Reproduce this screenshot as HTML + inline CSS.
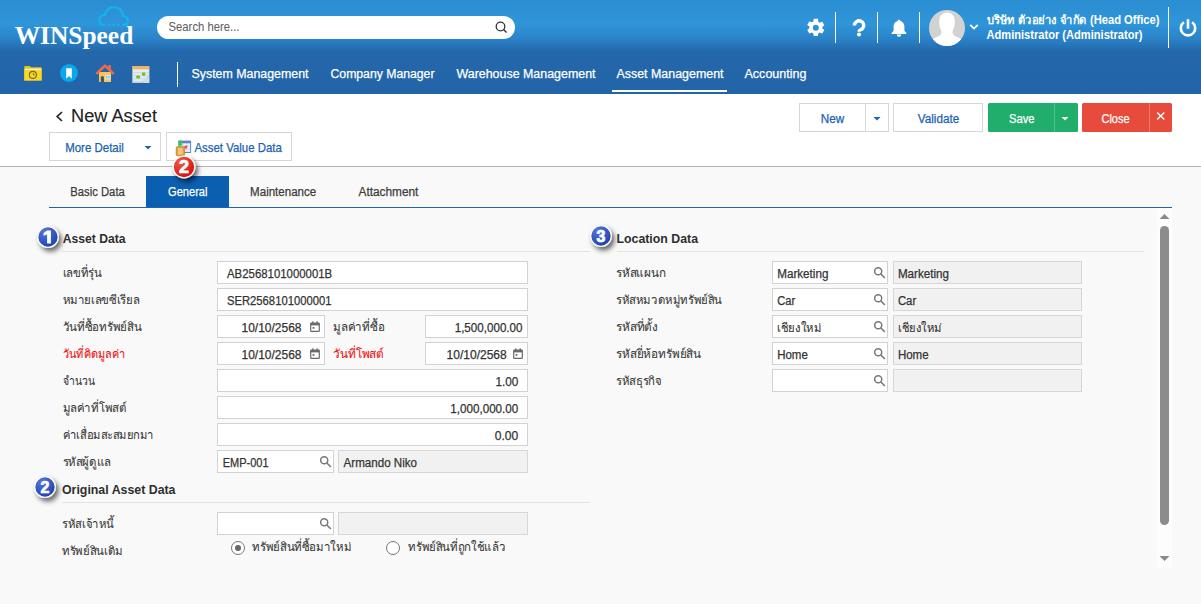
<!DOCTYPE html>
<html><head><meta charset="utf-8">
<style>
*{box-sizing:border-box;margin:0;padding:0}
html,body{width:1201px;height:604px;overflow:hidden;background:#f9f9f9;font-family:"Liberation Sans",sans-serif;color:#333}
.a{position:absolute}
.vd{position:absolute;background:#fff;width:1px}
.btn{position:absolute;border:1px solid #d6d6d6;background:#fff}
.inp{position:absolute;border:1px solid #d2d2d2;background:#fff;height:23px}
.ro{position:absolute;border:1px solid #d6d6d6;background:#f1f1f1;height:23px}
.hl{position:absolute;height:1px;background:#e3e3e3}
</style></head><body>
<div class="a" style="left:0;top:0;width:1201px;height:94px;background:linear-gradient(to bottom,#2b8dd2 0px,#2f95d9 24px,#2b84c9 38px,#2467ab 52px,#2264a7 94px)"></div>
<svg class="a" style="left:97px;top:4px" width="34" height="24" viewBox="0 0 34 24">
<path d="M7 20.9 C3.6 20.9 2.3 18.6 2.3 16.1 C2.3 12.9 4.8 10.7 7.9 10.9 C9.1 6.1 12.6 3.1 16.9 3.1 C22 3.1 25.8 7 26.1 11.9 C29.1 12.4 30.9 14.6 30.9 17.1 C30.9 19.6 29 20.9 26.4 20.9" fill="none" stroke="#14b2ee" stroke-width="2.3" stroke-linecap="round"/>
<path d="M11 20.9 H13.4 M15.6 20.9 H18 M20.2 20.9 H22.6" stroke="#14b2ee" stroke-width="2.3"/></svg>
<div class="a" style="left:157px;top:16px;width:358px;height:23px;border-radius:12px;background:#fff"></div>
<svg class="a" style="left:494px;top:20px" width="14" height="14" viewBox="0 0 14 14"><circle cx="6.5" cy="6.5" r="4.3" fill="none" stroke="#333" stroke-width="1.3"/><path d="M9.6 9.6 L12.5 12.5" stroke="#333" stroke-width="1.4"/></svg>
<svg class="a" style="left:805.3px;top:17.4px" width="21.6" height="21.6" viewBox="0 0 24 24"><path fill="#fff" d="M19.14 12.94c.04-.3.06-.61.06-.94 0-.32-.02-.64-.07-.94l2.03-1.58a.49.49 0 0 0 .12-.61l-1.92-3.32a.49.49 0 0 0-.59-.22l-2.39.96c-.5-.38-1.03-.7-1.62-.94l-.36-2.54A.48.48 0 0 0 13.92 2h-3.84c-.24 0-.43.17-.47.41l-.36 2.54c-.59.24-1.13.57-1.62.94l-2.39-.96a.48.48 0 0 0-.59.22L2.74 8.47c-.12.21-.08.47.12.61l2.03 1.58c-.05.3-.09.63-.09.94s.02.64.07.94l-2.03 1.58a.49.49 0 0 0-.12.61l1.92 3.32c.12.22.37.29.59.22l2.39-.96c.5.38 1.03.7 1.62.94l.36 2.54c.05.24.24.41.48.41h3.84c.24 0 .44-.17.47-.41l.36-2.54c.59-.24 1.13-.56 1.62-.94l2.39.96c.22.08.47 0 .59-.22l1.92-3.32c.12-.22.07-.47-.12-.61l-2.01-1.58zM12 15.3A3.3 3.3 0 1 1 12 8.7a3.3 3.3 0 0 1 0 6.6z"/></svg>
<div class="vd" style="left:835px;top:12px;height:31px"></div>
<svg class="a" style="left:851px;top:17px" width="16" height="22" viewBox="0 0 16 22"><path d="M3.45 8.4 A4.65 4.65 0 1 1 11.4 11.7 C9.5 12.8 8.1 13 8.1 14.2 V14.8" fill="none" stroke="#fff" stroke-width="3.4"/><circle cx="8" cy="17.5" r="2.05" fill="#fff"/></svg>
<div class="vd" style="left:877px;top:12px;height:31px"></div>
<svg class="a" style="left:890px;top:18px" width="18" height="20" viewBox="0 0 18 19"><path fill="#fff" d="M9 1.2c.8 0 1.3.5 1.3 1.2 2.6.6 4.1 2.8 4.1 5.6v4.3l2 2.2v.9H1.6v-.9l2-2.2V8c0-2.8 1.5-5 4.1-5.6 0-.7.5-1.2 1.3-1.2zM6.8 16.1h4.4c0 1.3-1 2.3-2.2 2.3s-2.2-1-2.2-2.3z"/></svg>
<div class="vd" style="left:919px;top:12px;height:31px"></div>
<svg class="a" style="left:929px;top:10px" width="36" height="36" viewBox="0 0 36 36"><defs><clipPath id="avc"><circle cx="18" cy="18" r="18"/></clipPath></defs><circle cx="18" cy="18" r="18" fill="#d2d2d2"/><path clip-path="url(#avc)" fill="#fff" d="M18 2.5 C23 2.5 25.8 6 25.8 11.5 C25.8 16 24.5 19.5 23.5 21.5 C23.5 24 24.5 25.5 27 26.5 C31 28 34 30 36 34 V36 H0 V34 C2 30 5 28 9 26.5 C11.5 25.5 12.5 24 12.5 21.5 C11.5 19.5 10.2 16 10.2 11.5 C10.2 6 13 2.5 18 2.5z"/></svg>
<svg class="a" style="left:969px;top:23px" width="10" height="8" viewBox="0 0 10 8"><path d="M1.2 1.8 L5 5.6 L8.8 1.8" fill="none" stroke="#fff" stroke-width="1.8"/></svg>
<div class="vd" style="left:1168px;top:7px;height:41px"></div>
<svg class="a" style="left:1178px;top:18px" width="20" height="20" viewBox="0 0 20 20"><path d="M5.9 4.3 A7.2 7.2 0 1 0 14.1 4.3" fill="none" stroke="#fff" stroke-width="2.6"/><path d="M10 1.2 V10.8" stroke="#fff" stroke-width="2.6"/></svg>
<svg class="a" style="left:23px;top:64px" width="20" height="18" viewBox="0 0 20 18"><path d="M1.3 2.6 Q1.3 2 2 2 H6.8 L7.8 3.2 H18 Q18.6 3.2 18.6 3.8 V16.5 H1.3z" fill="#e8c01a"/><rect x="1.3" y="4.3" width="17.3" height="12.2" fill="#f7d82a"/><rect x="2" y="4.8" width="15.8" height="1.2" fill="#fbf3d0"/><circle cx="9.9" cy="10.9" r="3.5" fill="none" stroke="#7a6812" stroke-width="1.1"/><path d="M9.9 10.9 V8.6 L12 11.6z" fill="#7a6812"/></svg>
<svg class="a" style="left:60px;top:64px" width="18" height="18" viewBox="0 0 18 18"><circle cx="9" cy="9" r="9" fill="#0aa7ea"/><path d="M6.2 4.2 H11.8 V14.8 L9 12.1 L6.2 14.8z" fill="#fff"/></svg>
<svg class="a" style="left:95px;top:63px" width="20" height="20" viewBox="0 0 20 20"><rect x="13.2" y="2" width="2.6" height="5" fill="#ee6a4c"/><rect x="4" y="9" width="12" height="10" fill="#f8c65a"/><path d="M2 10.2 L10 2.6 L18 10.2" fill="none" stroke="#ee6a4c" stroke-width="2.6" stroke-linecap="round" stroke-linejoin="round"/><path d="M5.8 19 V14.5 A1.6 1.6 0 0 1 9 14.5 V19z" fill="#4b5563"/><rect x="10.8" y="12.4" width="4.2" height="3.6" fill="#7fc6f0" stroke="#fff" stroke-width="0.5"/><path d="M12.9 12.4 V16" stroke="#fff" stroke-width="0.6"/></svg>
<svg class="a" style="left:132px;top:65.6px" width="18" height="17" viewBox="0 0 18 17"><rect x="0.6" y="0.5" width="16.5" height="16.3" fill="#f3f8fb" stroke="#c8ccd0" stroke-width="0.5"/><rect x="1.3" y="4.2" width="2.4" height="2.2" fill="#d3ebfa"/><rect x="1.3" y="7.2" width="2.4" height="2.2" fill="#d3ebfa"/><rect x="1.3" y="10.2" width="2.4" height="2.2" fill="#d3ebfa"/><rect x="1.3" y="13.2" width="2.4" height="2.2" fill="#d3ebfa"/><rect x="4.5" y="4.2" width="2.4" height="2.2" fill="#d3ebfa"/><rect x="4.5" y="7.2" width="2.4" height="2.2" fill="#d3ebfa"/><rect x="4.5" y="10.2" width="2.4" height="2.2" fill="#d3ebfa"/><rect x="4.5" y="13.2" width="2.4" height="2.2" fill="#d3ebfa"/><rect x="7.7" y="4.2" width="2.4" height="2.2" fill="#d3ebfa"/><rect x="7.7" y="7.2" width="2.4" height="2.2" fill="#d3ebfa"/><rect x="7.7" y="10.2" width="2.4" height="2.2" fill="#d3ebfa"/><rect x="7.7" y="13.2" width="2.4" height="2.2" fill="#d3ebfa"/><rect x="10.9" y="4.2" width="2.4" height="2.2" fill="#d3ebfa"/><rect x="10.9" y="7.2" width="2.4" height="2.2" fill="#d3ebfa"/><rect x="10.9" y="10.2" width="2.4" height="2.2" fill="#d3ebfa"/><rect x="10.9" y="13.2" width="2.4" height="2.2" fill="#d3ebfa"/><rect x="14.1" y="4.2" width="2.4" height="2.2" fill="#d3ebfa"/><rect x="14.1" y="7.2" width="2.4" height="2.2" fill="#d3ebfa"/><rect x="14.1" y="10.2" width="2.4" height="2.2" fill="#d3ebfa"/><rect x="14.1" y="13.2" width="2.4" height="2.2" fill="#d3ebfa"/><path d="M0.6 6.8h16.5M0.6 9.8h16.5M0.6 12.8h16.5M0.6 15.8h16.5" stroke="#b5b9bd" stroke-width="0.6"/><rect x="0.6" y="0.5" width="16.5" height="3" fill="#fdb05a"/><rect x="4.3" y="9.6" width="3.6" height="2.8" fill="#6fbf12"/><rect x="10" y="6.6" width="3.3" height="3" fill="#6fbf12"/><path d="M10.6 16.8 L17.1 10.6 V16.8z" fill="#d8dde3"/><path d="M10.6 16.8 Q11.8 12.2 17.1 10.6 Q13.2 14 10.6 16.8z" fill="#f7f9fb" stroke="#9aa8b8" stroke-width="0.4"/></svg>
<div class="vd" style="left:177px;top:62px;height:25px"></div>
<div class="a" style="left:612px;top:90px;width:115px;height:2px;background:#fff"></div>
<div class="a" style="left:0;top:94px;width:1201px;height:73px;background:#fff;border-bottom:1px solid #b4b4b4"></div>
<svg class="a" style="left:54px;top:110px" width="11" height="13" viewBox="0 0 11 13"><path d="M8 2 L3.2 6.5 L8 11" fill="none" stroke="#222" stroke-width="1.7"/></svg>
<div class="btn" style="left:49px;top:132px;width:112px;height:29px"></div>
<svg class="a" style="left:144px;top:146px" width="8" height="4" viewBox="0 0 8 4"><path d="M0.5 0 H7.5 L4 3.5z" fill="#1a62b2"/></svg>
<div class="btn" style="left:166px;top:132px;width:126px;height:29px"></div>
<svg class="a" style="left:175px;top:140px" width="17" height="17" viewBox="0 0 17 17"><rect x="3.8" y="1.1" width="11.8" height="11.4" fill="#f2f6fc" stroke="#5a84c4" stroke-width="1"/><rect x="3.8" y="1.1" width="11.8" height="2.2" fill="#5a84c4"/><path d="M4 6h11.5M4 9h11.5M8 3.3v9M12 3.3v9" stroke="#a9c0e3" stroke-width="0.6"/><circle cx="10.8" cy="7" r="1.6" fill="#ee4a5a"/><rect x="1.2" y="6.8" width="8.4" height="9" rx="1.2" fill="#e0a23e" stroke="#b97a1c" stroke-width="0.7"/><rect x="3" y="8" width="4.6" height="6.5" fill="#f3c878"/><path d="M4.3 0.6 H6.5 V3.8 H7.8 L5.4 6.6 L3 3.8 H4.3z" fill="#1fd43c"/></svg>
<div class="btn" style="left:799px;top:103px;width:90px;height:29px"></div>
<div class="a" style="left:865px;top:104px;width:1px;height:27px;background:#d6d6d6"></div>
<svg class="a" style="left:873px;top:117px" width="8" height="4" viewBox="0 0 8 4"><path d="M0.5 0 H7.5 L4 3.5z" fill="#1a62b2"/></svg>
<div class="btn" style="left:893px;top:103px;width:90px;height:29px"></div>
<div class="a" style="left:988px;top:103px;width:90px;height:29px;background:#21ad6b;border-radius:1.5px"></div>
<div class="a" style="left:1054px;top:103px;width:1px;height:29px;background:#4cc38b"></div>
<svg class="a" style="left:1061px;top:117px" width="8" height="4" viewBox="0 0 8 4"><path d="M0.5 0 H7.5 L4 3.5z" fill="#fff"/></svg>
<div class="a" style="left:1082px;top:103px;width:90px;height:29px;background:#e74b3c;border-radius:1.5px"></div>
<div class="a" style="left:1149px;top:103px;width:1px;height:29px;background:#ee7a6e"></div>
<svg class="a" style="left:1156px;top:112px" width="10" height="8" viewBox="0 0 10 8"><path d="M1.2 0.5 L8.3 7.5 M8.3 0.5 L1.2 7.5" stroke="#fff" stroke-width="1.4"/></svg>
<div class="a" style="left:146px;top:176px;width:83px;height:32px;background:#0b5fb0"></div>
<div class="a" style="left:49px;top:207px;width:1123px;height:1px;background:#1d64b1"></div>
<div class="hl" style="left:62px;top:251px;width:1082px"></div>
<div class="inp" style="left:217px;top:261px;width:311px"></div>
<div class="inp" style="left:217px;top:288px;width:311px"></div>
<div class="inp" style="left:217px;top:315px;width:108px"></div>
<svg class="a" style="left:310px;top:320.5px" width="10" height="11" viewBox="0 0 10 11"><rect x="0.7" y="2.2" width="8.6" height="8.1" rx="0.6" fill="none" stroke="#6a6a6a" stroke-width="1.2"/><rect x="0.7" y="2" width="8.6" height="2.4" fill="#6a6a6a"/><rect x="2.2" y="0.3" width="1.3" height="2" fill="#6a6a6a"/><rect x="6.5" y="0.3" width="1.3" height="2" fill="#6a6a6a"/><rect x="2.6" y="6" width="1.8" height="1.8" fill="#6a6a6a"/></svg>
<div class="inp" style="left:425px;top:315px;width:103px"></div>
<div class="inp" style="left:217px;top:342px;width:108px"></div>
<svg class="a" style="left:310px;top:347.5px" width="10" height="11" viewBox="0 0 10 11"><rect x="0.7" y="2.2" width="8.6" height="8.1" rx="0.6" fill="none" stroke="#6a6a6a" stroke-width="1.2"/><rect x="0.7" y="2" width="8.6" height="2.4" fill="#6a6a6a"/><rect x="2.2" y="0.3" width="1.3" height="2" fill="#6a6a6a"/><rect x="6.5" y="0.3" width="1.3" height="2" fill="#6a6a6a"/><rect x="2.6" y="6" width="1.8" height="1.8" fill="#6a6a6a"/></svg>
<div class="inp" style="left:425px;top:342px;width:103px"></div>
<svg class="a" style="left:513px;top:347.5px" width="10" height="11" viewBox="0 0 10 11"><rect x="0.7" y="2.2" width="8.6" height="8.1" rx="0.6" fill="none" stroke="#6a6a6a" stroke-width="1.2"/><rect x="0.7" y="2" width="8.6" height="2.4" fill="#6a6a6a"/><rect x="2.2" y="0.3" width="1.3" height="2" fill="#6a6a6a"/><rect x="6.5" y="0.3" width="1.3" height="2" fill="#6a6a6a"/><rect x="2.6" y="6" width="1.8" height="1.8" fill="#6a6a6a"/></svg>
<div class="inp" style="left:217px;top:369px;width:311px"></div>
<div class="inp" style="left:217px;top:396px;width:311px"></div>
<div class="inp" style="left:217px;top:423px;width:311px"></div>
<div class="inp" style="left:217px;top:450px;width:117px"></div>
<svg class="a" style="left:320px;top:456px" width="12" height="12" viewBox="0 0 12 12"><circle cx="4.2" cy="4.3" r="3.55" fill="none" stroke="#777" stroke-width="1.5"/><path d="M6.9 7 L10.9 11" stroke="#777" stroke-width="1.6"/></svg>
<div class="ro" style="left:338px;top:450px;width:190px"></div>
<div class="hl" style="left:62px;top:502px;width:528px"></div>
<div class="inp" style="left:217px;top:512px;width:117px"></div>
<svg class="a" style="left:320px;top:518px" width="12" height="12" viewBox="0 0 12 12"><circle cx="4.2" cy="4.3" r="3.55" fill="none" stroke="#777" stroke-width="1.5"/><path d="M6.9 7 L10.9 11" stroke="#777" stroke-width="1.6"/></svg>
<div class="ro" style="left:338px;top:512px;width:190px"></div>
<div class="a" style="left:231px;top:541px;width:14px;height:14px;border:1px solid #777;border-radius:50%;background:#fff"></div>
<div class="a" style="left:235px;top:545px;width:6px;height:6px;border-radius:50%;background:#666"></div>
<div class="a" style="left:386px;top:541px;width:14px;height:14px;border:1px solid #777;border-radius:50%;background:#fff"></div>
<div class="inp" style="left:772px;top:261px;width:116px"></div>
<svg class="a" style="left:874px;top:267px" width="12" height="12" viewBox="0 0 12 12"><circle cx="4.2" cy="4.3" r="3.55" fill="none" stroke="#777" stroke-width="1.5"/><path d="M6.9 7 L10.9 11" stroke="#777" stroke-width="1.6"/></svg>
<div class="ro" style="left:893px;top:261px;width:189px"></div>
<div class="inp" style="left:772px;top:288px;width:116px"></div>
<svg class="a" style="left:874px;top:294px" width="12" height="12" viewBox="0 0 12 12"><circle cx="4.2" cy="4.3" r="3.55" fill="none" stroke="#777" stroke-width="1.5"/><path d="M6.9 7 L10.9 11" stroke="#777" stroke-width="1.6"/></svg>
<div class="ro" style="left:893px;top:288px;width:189px"></div>
<div class="inp" style="left:772px;top:315px;width:116px"></div>
<svg class="a" style="left:874px;top:321px" width="12" height="12" viewBox="0 0 12 12"><circle cx="4.2" cy="4.3" r="3.55" fill="none" stroke="#777" stroke-width="1.5"/><path d="M6.9 7 L10.9 11" stroke="#777" stroke-width="1.6"/></svg>
<div class="ro" style="left:893px;top:315px;width:189px"></div>
<div class="inp" style="left:772px;top:342px;width:116px"></div>
<svg class="a" style="left:874px;top:348px" width="12" height="12" viewBox="0 0 12 12"><circle cx="4.2" cy="4.3" r="3.55" fill="none" stroke="#777" stroke-width="1.5"/><path d="M6.9 7 L10.9 11" stroke="#777" stroke-width="1.6"/></svg>
<div class="ro" style="left:893px;top:342px;width:189px"></div>
<div class="inp" style="left:772px;top:369px;width:116px"></div>
<svg class="a" style="left:874px;top:375px" width="12" height="12" viewBox="0 0 12 12"><circle cx="4.2" cy="4.3" r="3.55" fill="none" stroke="#777" stroke-width="1.5"/><path d="M6.9 7 L10.9 11" stroke="#777" stroke-width="1.6"/></svg>
<div class="ro" style="left:893px;top:369px;width:189px"></div>
<svg class="a" style="left:33px;top:221.5px" width="38" height="38" viewBox="0 0 38 38"><defs><radialGradient id="gb1" cx="35%" cy="25%" r="80%"><stop offset="0" stop-color="#5577dd"/><stop offset="1" stop-color="#1d3fae"/></radialGradient><filter id="fb1" x="-40%" y="-40%" width="200%" height="200%"><feDropShadow dx="2.6" dy="3.4" stdDeviation="2.6" flood-opacity="0.6"/></filter></defs><circle cx="15" cy="15" r="10.3" fill="url(#gb1)" stroke="#fbfbf4" stroke-width="1.3" filter="url(#fb1)"/><path transform="translate(15 15)" d="M-0.9 -6.6 H2.9 V6.4 H-0.9 V-2.4 L-4.4 -1.2 V-3.9 Z" fill="#fff"/></svg>
<svg class="a" style="left:30px;top:472px" width="38" height="38" viewBox="0 0 38 38"><defs><radialGradient id="gb2" cx="35%" cy="25%" r="80%"><stop offset="0" stop-color="#5577dd"/><stop offset="1" stop-color="#1d3fae"/></radialGradient><filter id="fb2" x="-40%" y="-40%" width="200%" height="200%"><feDropShadow dx="2.6" dy="3.4" stdDeviation="2.6" flood-opacity="0.6"/></filter></defs><circle cx="15" cy="15" r="10.3" fill="url(#gb2)" stroke="#fbfbf4" stroke-width="1.3" filter="url(#fb2)"/><text x="15" y="20.7" text-anchor="middle" font-family="Liberation Sans" font-weight="bold" font-size="16" fill="#fff" stroke="#fff" stroke-width="0.7">2</text></svg>
<div class="a" style="left:590px;top:246px;width:27px;height:10px;background:#f9f9f9"></div>
<svg class="a" style="left:586px;top:220.5px" width="38" height="38" viewBox="0 0 38 38"><defs><radialGradient id="gb3" cx="35%" cy="25%" r="80%"><stop offset="0" stop-color="#5577dd"/><stop offset="1" stop-color="#1d3fae"/></radialGradient><filter id="fb3" x="-40%" y="-40%" width="200%" height="200%"><feDropShadow dx="2.6" dy="3.4" stdDeviation="2.6" flood-opacity="0.6"/></filter></defs><circle cx="15" cy="15" r="10.3" fill="url(#gb3)" stroke="#fbfbf4" stroke-width="1.3" filter="url(#fb3)"/><text x="15" y="20.7" text-anchor="middle" font-family="Liberation Sans" font-weight="bold" font-size="16" fill="#fff" stroke="#fff" stroke-width="0.7">3</text></svg>
<svg class="a" style="left:169px;top:152px" width="38" height="38" viewBox="0 0 38 38"><defs><radialGradient id="gr2" cx="35%" cy="25%" r="80%"><stop offset="0" stop-color="#f25a4a"/><stop offset="1" stop-color="#d40c0c"/></radialGradient><filter id="fr2" x="-40%" y="-40%" width="200%" height="200%"><feDropShadow dx="2.6" dy="3.4" stdDeviation="2.6" flood-opacity="0.6"/></filter></defs><circle cx="15" cy="15" r="10.8" fill="url(#gr2)" stroke="#fbfbf4" stroke-width="1.3" filter="url(#fr2)"/><text x="15" y="21.4" text-anchor="middle" font-family="Liberation Sans" font-weight="bold" font-size="18" fill="#fff" stroke="#fff" stroke-width="0.7">2</text></svg>
<div class="a" style="left:1157px;top:208px;width:15px;height:360px;background:#fdfdfd"></div>
<svg class="a" style="left:1159px;top:213px" width="11" height="7" viewBox="0 0 11 7"><path d="M0.5 6 L5.5 1 L10.5 6z" fill="#8a8a8a"/></svg>
<div class="a" style="left:1160px;top:226px;width:9px;height:299px;border-radius:4.5px;background:#8c8c8c"></div>
<svg class="a" style="left:1159px;top:555px" width="11" height="7" viewBox="0 0 11 7"><path d="M0.5 1 L5.5 6 L10.5 1z" fill="#8a8a8a"/></svg>
<svg class="a" style="left:0;top:0" width="1201" height="604" font-family="Liberation Sans">
<text x="14.7" y="44" font-size="26" fill="#fff" font-weight="bold" font-family="Liberation Serif" textLength="118.6" lengthAdjust="spacingAndGlyphs">WINSpeed</text>
<text x="168.5" y="31" font-size="12.5" fill="#606060" stroke="#606060" stroke-width="0.05" textLength="71.0" lengthAdjust="spacingAndGlyphs">Search here...</text>
<text x="986.5" y="23.5" font-size="12" fill="#fff" font-weight="bold" textLength="173.0" lengthAdjust="spacingAndGlyphs">บริษัท ตัวอย่าง จำกัด (Head Office)</text>
<text x="986.5" y="39" font-size="12.5" fill="#fff" font-weight="bold" textLength="156.0" lengthAdjust="spacingAndGlyphs">Administrator (Administrator)</text>
<text x="191.5" y="78" font-size="12.5" fill="#fff" stroke="#fff" stroke-width="0.25" textLength="117.0" lengthAdjust="spacingAndGlyphs">System Management</text>
<text x="330.5" y="78" font-size="12.5" fill="#fff" stroke="#fff" stroke-width="0.25" textLength="104.0" lengthAdjust="spacingAndGlyphs">Company Manager</text>
<text x="456.5" y="78" font-size="12.5" fill="#fff" stroke="#fff" stroke-width="0.25" textLength="139.0" lengthAdjust="spacingAndGlyphs">Warehouse Management</text>
<text x="616.5" y="78" font-size="12.5" fill="#fff" stroke="#fff" stroke-width="0.25" textLength="107.0" lengthAdjust="spacingAndGlyphs">Asset Management</text>
<text x="744.5" y="78" font-size="12.5" fill="#fff" stroke="#fff" stroke-width="0.25" textLength="62.0" lengthAdjust="spacingAndGlyphs">Accounting</text>
<text x="71.0" y="122" font-size="17.5" fill="#222" stroke="#222" stroke-width="0.1" textLength="86.0" lengthAdjust="spacingAndGlyphs">New Asset</text>
<text x="65.2" y="152" font-size="12.8" fill="#1a62b2" stroke="#1a62b2" stroke-width="0.25" textLength="58.6" lengthAdjust="spacingAndGlyphs">More Detail</text>
<text x="194.5" y="152" font-size="12.8" fill="#1a62b2" stroke="#1a62b2" stroke-width="0.25" textLength="87.3" lengthAdjust="spacingAndGlyphs">Asset Value Data</text>
<text x="820.8" y="122.6" font-size="12" fill="#1a62b2" stroke="#1a62b2" stroke-width="0.25" textLength="23.4" lengthAdjust="spacingAndGlyphs">New</text>
<text x="917.8" y="122.6" font-size="12" fill="#1a62b2" stroke="#1a62b2" stroke-width="0.25" textLength="41.4" lengthAdjust="spacingAndGlyphs">Validate</text>
<text x="1009.1" y="122.6" font-size="12" fill="#fff" stroke="#fff" stroke-width="0.25" textLength="25.4" lengthAdjust="spacingAndGlyphs">Save</text>
<text x="1101.5" y="122.6" font-size="12" fill="#fff" stroke="#fff" stroke-width="0.25" textLength="28.0" lengthAdjust="spacingAndGlyphs">Close</text>
<text x="70.3" y="195.6" font-size="12.3" fill="#3c3c3c" stroke="#3c3c3c" stroke-width="0.25" textLength="54.5" lengthAdjust="spacingAndGlyphs">Basic Data</text>
<text x="168.1" y="195.6" font-size="12.3" fill="#fff" stroke="#fff" stroke-width="0.25" textLength="39.4" lengthAdjust="spacingAndGlyphs">General</text>
<text x="250.1" y="195.6" font-size="12.3" fill="#3c3c3c" stroke="#3c3c3c" stroke-width="0.25" textLength="66.1" lengthAdjust="spacingAndGlyphs">Maintenance</text>
<text x="358.5" y="195.6" font-size="12.3" fill="#3c3c3c" stroke="#3c3c3c" stroke-width="0.25" textLength="59.9" lengthAdjust="spacingAndGlyphs">Attachment</text>
<text x="62.8" y="242.6" font-size="12" fill="#2e2e2e" font-weight="bold" textLength="62.7" lengthAdjust="spacingAndGlyphs">Asset Data</text>
<text x="616.5" y="242.8" font-size="12" fill="#2e2e2e" font-weight="bold" textLength="81.5" lengthAdjust="spacingAndGlyphs">Location Data</text>
<text x="62.5" y="277.1" font-size="12" fill="#3a3a3a" stroke="#3a3a3a" stroke-width="0.08" textLength="39.0" lengthAdjust="spacingAndGlyphs">เลขที่รุ่น</text>
<text x="62.5" y="304.1" font-size="12" fill="#3a3a3a" stroke="#3a3a3a" stroke-width="0.08" textLength="77.0" lengthAdjust="spacingAndGlyphs">หมายเลขซีเรียล</text>
<text x="62.5" y="331.1" font-size="12" fill="#3a3a3a" stroke="#3a3a3a" stroke-width="0.08" textLength="79.0" lengthAdjust="spacingAndGlyphs">วันที่ซื้อทรัพย์สิน</text>
<text x="62.5" y="358.1" font-size="12" fill="#f01010" stroke="#f01010" stroke-width="0.08" textLength="63.0" lengthAdjust="spacingAndGlyphs">วันที่คิดมูลค่า</text>
<text x="62.5" y="385.1" font-size="12" fill="#3a3a3a" stroke="#3a3a3a" stroke-width="0.08" textLength="32.0" lengthAdjust="spacingAndGlyphs">จำนวน</text>
<text x="62.5" y="412.1" font-size="12" fill="#3a3a3a" stroke="#3a3a3a" stroke-width="0.08" textLength="64.0" lengthAdjust="spacingAndGlyphs">มูลค่าที่โพสต์</text>
<text x="62.5" y="439.1" font-size="12" fill="#3a3a3a" stroke="#3a3a3a" stroke-width="0.08" textLength="91.0" lengthAdjust="spacingAndGlyphs">ค่าเสื่อมสะสมยกมา</text>
<text x="62.5" y="466.1" font-size="12" fill="#3a3a3a" stroke="#3a3a3a" stroke-width="0.08" textLength="48.5" lengthAdjust="spacingAndGlyphs">รหัสผู้ดูแล</text>
<text x="227.0" y="277.6" font-size="12" fill="#333" stroke="#333" stroke-width="0.25" textLength="105.2" lengthAdjust="spacingAndGlyphs">AB2568101000001B</text>
<text x="227.0" y="304.6" font-size="12" fill="#333" stroke="#333" stroke-width="0.25" textLength="104.4" lengthAdjust="spacingAndGlyphs">SER2568101000001</text>
<text x="241.5" y="331.6" font-size="12" fill="#333" stroke="#333" stroke-width="0.25" textLength="60.0" lengthAdjust="spacingAndGlyphs">10/10/2568</text>
<text x="333.2" y="331.1" font-size="12" fill="#3a3a3a" stroke="#3a3a3a" stroke-width="0.08" textLength="51.3" lengthAdjust="spacingAndGlyphs">มูลค่าที่ซื้อ</text>
<text x="454.7" y="331.6" font-size="12" fill="#333" stroke="#333" stroke-width="0.25" textLength="67.8" lengthAdjust="spacingAndGlyphs">1,500,000.00</text>
<text x="241.5" y="358.6" font-size="12" fill="#333" stroke="#333" stroke-width="0.25" textLength="60.0" lengthAdjust="spacingAndGlyphs">10/10/2568</text>
<text x="333.2" y="358.1" font-size="12" fill="#f01010" stroke="#f01010" stroke-width="0.08" textLength="50.9" lengthAdjust="spacingAndGlyphs">วันที่โพสต์</text>
<text x="446.6" y="358.6" font-size="12" fill="#333" stroke="#333" stroke-width="0.25" textLength="60.1" lengthAdjust="spacingAndGlyphs">10/10/2568</text>
<text x="495.5" y="385.6" font-size="12" fill="#333" stroke="#333" stroke-width="0.25" textLength="22.8" lengthAdjust="spacingAndGlyphs">1.00</text>
<text x="450.3" y="412.6" font-size="12" fill="#333" stroke="#333" stroke-width="0.25" textLength="68.0" lengthAdjust="spacingAndGlyphs">1,000,000.00</text>
<text x="494.8" y="439.6" font-size="12" fill="#333" stroke="#333" stroke-width="0.25" textLength="23.5" lengthAdjust="spacingAndGlyphs">0.00</text>
<text x="222.7" y="466.6" font-size="12" fill="#333" stroke="#333" stroke-width="0.25" textLength="45.9" lengthAdjust="spacingAndGlyphs">EMP-001</text>
<text x="343.6" y="466.6" font-size="12" fill="#333" stroke="#333" stroke-width="0.25" textLength="73.4" lengthAdjust="spacingAndGlyphs">Armando Niko</text>
<text x="62.0" y="494.2" font-size="12" fill="#2e2e2e" font-weight="bold" textLength="113.5" lengthAdjust="spacingAndGlyphs">Original Asset Data</text>
<text x="62.0" y="528.1" font-size="12" fill="#3a3a3a" stroke="#3a3a3a" stroke-width="0.08" textLength="51.8" lengthAdjust="spacingAndGlyphs">รหัสเจ้าหนี้</text>
<text x="62.0" y="555" font-size="12" fill="#3a3a3a" stroke="#3a3a3a" stroke-width="0.08" textLength="61.0" lengthAdjust="spacingAndGlyphs">ทรัพย์สินเดิม</text>
<text x="252.2" y="551" font-size="12" fill="#3a3a3a" stroke="#3a3a3a" stroke-width="0.08" textLength="99.3" lengthAdjust="spacingAndGlyphs">ทรัพย์สินที่ซื้อมาใหม่</text>
<text x="408.2" y="551" font-size="12" fill="#3a3a3a" stroke="#3a3a3a" stroke-width="0.08" textLength="97.0" lengthAdjust="spacingAndGlyphs">ทรัพย์สินที่ถูกใช้แล้ว</text>
<text x="616.0" y="277.1" font-size="12" fill="#3a3a3a" stroke="#3a3a3a" stroke-width="0.08" textLength="49.7" lengthAdjust="spacingAndGlyphs">รหัสแผนก</text>
<text x="777.2" y="277.6" font-size="12" fill="#333" stroke="#333" stroke-width="0.25" textLength="51.2" lengthAdjust="spacingAndGlyphs">Marketing</text>
<text x="897.9" y="277.6" font-size="12" fill="#333" stroke="#333" stroke-width="0.25" textLength="51.1" lengthAdjust="spacingAndGlyphs">Marketing</text>
<text x="616.0" y="304.1" font-size="12" fill="#3a3a3a" stroke="#3a3a3a" stroke-width="0.08" textLength="105.9" lengthAdjust="spacingAndGlyphs">รหัสหมวดหมู่ทรัพย์สิน</text>
<text x="777.2" y="304.6" font-size="12" fill="#333" stroke="#333" stroke-width="0.25" textLength="17.9" lengthAdjust="spacingAndGlyphs">Car</text>
<text x="897.9" y="304.6" font-size="12" fill="#333" stroke="#333" stroke-width="0.25" textLength="18.3" lengthAdjust="spacingAndGlyphs">Car</text>
<text x="616.0" y="331.1" font-size="12" fill="#3a3a3a" stroke="#3a3a3a" stroke-width="0.08" textLength="42.1" lengthAdjust="spacingAndGlyphs">รหัสที่ตั้ง</text>
<text x="777.2" y="331.6" font-size="12" fill="#333" stroke="#333" stroke-width="0.08" textLength="44.3" lengthAdjust="spacingAndGlyphs">เชียงใหม่</text>
<text x="897.9" y="331.6" font-size="12" fill="#333" stroke="#333" stroke-width="0.08" textLength="43.8" lengthAdjust="spacingAndGlyphs">เชียงใหม่</text>
<text x="616.0" y="358.1" font-size="12" fill="#3a3a3a" stroke="#3a3a3a" stroke-width="0.08" textLength="85.0" lengthAdjust="spacingAndGlyphs">รหัสยี่ห้อทรัพย์สิน</text>
<text x="777.2" y="358.6" font-size="12" fill="#333" stroke="#333" stroke-width="0.25" textLength="30.6" lengthAdjust="spacingAndGlyphs">Home</text>
<text x="897.9" y="358.6" font-size="12" fill="#333" stroke="#333" stroke-width="0.25" textLength="30.7" lengthAdjust="spacingAndGlyphs">Home</text>
<text x="616.0" y="385.1" font-size="12" fill="#3a3a3a" stroke="#3a3a3a" stroke-width="0.08" textLength="45.5" lengthAdjust="spacingAndGlyphs">รหัสธุรกิจ</text>
</svg>
</body></html>
